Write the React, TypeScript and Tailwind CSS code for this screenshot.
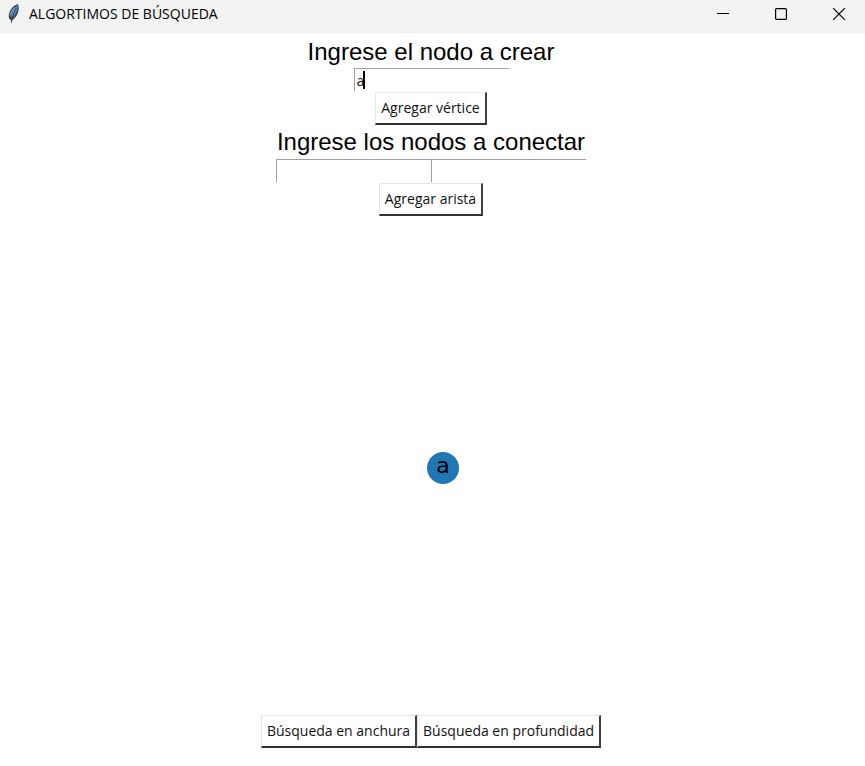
import { useState } from "react";
import type { ReactNode } from "react";

function FeatherIcon() {
  return (
    <svg width="14" height="20" viewBox="0 0 14 20" aria-hidden="true">
      <path
        d="M11 0.2C7.4 0.8 3.6 4.4 2.2 8.8C1.4 11.4 1.6 13.6 2.4 15L4 16.2L4.4 19.2L5.4 16C7.8 14.6 9.8 12 11 8.8C12 5.6 12.2 2.2 11 0.2Z"
        fill="#4a4a4c"
      />
      <path d="M10.6 1.6C8 3 5.4 6.6 4.4 10.8L4.2 13.8C7 12 9 9.2 10 6.2C10.8 4.2 11 2.8 10.6 1.6Z" fill="#4b8fe0" />
      <path d="M8 3.4C5.6 5.4 4 8.4 3.4 11.4" fill="none" stroke="#9db4cc" strokeWidth="1" />
      <path d="M9.4 4C7 8 5.4 11.6 4.4 18.6" fill="none" stroke="#22354e" strokeWidth="0.8" />
    </svg>
  );
}

function WindowButton({ label, children }: { label: string; children: ReactNode }) {
  return (
    <button type="button" aria-label={label} className="flex h-7 w-[52px] items-center justify-center text-black">
      <svg width="14" height="14" viewBox="0 0 14 14" fill="none" stroke="currentColor" strokeWidth="1.2" aria-hidden="true">
        {children}
      </svg>
    </button>
  );
}

function TkButton({ children }: { children: ReactNode }) {
  return (
    <button
      type="button"
      className="h-[33px] border-t border-r-2 border-b-2 border-l border-t-[#e6e6e6] border-r-[#404040] border-b-[#303030] border-l-[#e6e6e6] bg-white px-[5px] text-sm leading-5 whitespace-nowrap text-[#111]"
    >
      {children}
    </button>
  );
}

const entryStyle =
  "block h-[23px] w-[155px] rounded-none border-t border-l border-[#a0a0a0] bg-white pl-[2px] text-sm leading-5 text-[#222] caret-transparent outline-none";

export default function App() {
  const [node, setNode] = useState("a");
  const [from, setFrom] = useState("");
  const [to, setTo] = useState("");

  return (
    <div className="flex min-h-screen flex-col bg-white font-['Open_Sans','Noto_Sans',sans-serif] text-black">
      <header className="flex h-[33px] items-start bg-[#f2f2f2] pl-[7px]">
        <div className="flex h-7 items-center gap-2">
          <FeatherIcon />
          <h1 className="text-sm leading-5">ALGORTIMOS DE BÚSQUEDA</h1>
        </div>
        <div className="ml-auto flex gap-[6px]">
          <WindowButton label="Minimizar">
            <path d="M1 6.5H13" strokeWidth="1" />
          </WindowButton>
          <WindowButton label="Maximizar">
            <rect x="1.6" y="1.6" width="10.8" height="10.8" rx="1" />
          </WindowButton>
          <WindowButton label="Cerrar">
            <path d="M1.2 1.2L12.8 12.8M12.8 1.2L1.2 12.8" />
          </WindowButton>
        </div>
      </header>

      <main className="flex flex-1 flex-col items-center pr-[3px] pb-[18px]">
        <label htmlFor="node" className="pt-[2px] font-['Liberation_Sans',Arial,sans-serif] text-2xl leading-[33px]">
          Ingrese el nodo a crear
        </label>
        <div className="relative">
          <input id="node" className={entryStyle} value={node} onChange={(e) => setNode(e.target.value)} />
          <span className="absolute top-[3px] left-[9px] h-[18px] w-[2px] bg-black" />
        </div>
        <div className="pt-px">
          <TkButton>Agregar vértice</TkButton>
        </div>

        <fieldset className="flex flex-col items-center">
          <legend className="mx-auto font-['Liberation_Sans',Arial,sans-serif] text-2xl leading-[34px]">
            Ingrese los nodos a conectar
          </legend>
          <div className="flex">
            <input aria-label="Primer nodo" className={entryStyle} value={from} onChange={(e) => setFrom(e.target.value)} />
            <input aria-label="Segundo nodo" className={entryStyle} value={to} onChange={(e) => setTo(e.target.value)} />
          </div>
          <div className="pt-px">
            <TkButton>Agregar arista</TkButton>
          </div>
        </fieldset>

        <section aria-label="Grafo" className="relative w-full flex-1">
          <div className="absolute top-1/2 left-1/2 mt-[-14px] ml-[-4px] flex size-8 items-center justify-center rounded-full bg-[#1f77b4] pb-1 font-['DejaVu_Sans',sans-serif] text-[22px] leading-none">
            a
          </div>
        </section>

        <div className="flex">
          <TkButton>Búsqueda en anchura</TkButton>
          <TkButton>Búsqueda en profundidad</TkButton>
        </div>
      </main>
    </div>
  );
}
